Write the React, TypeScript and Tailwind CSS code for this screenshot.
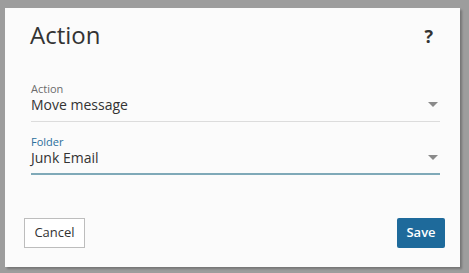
function Caret() {
  return (
    <svg width="10" height="6" viewBox="0 0 10 6" className="shrink-0">
      <path d="M0 0 L10 0 L5 5 Z" fill="#8a8a8a" />
    </svg>
  );
}

function Field({ label, value, active }: { label: string; value: string; active?: boolean }) {
  return (
    <div className={active ? "border-b-2 border-[#7fa9b8]" : "border-b border-[#dcdcdc]"}>
      <div className={`text-[11px] leading-[13px] ${active ? "text-[#2b6f9c]" : "text-[#6b6b6b]"}`}>{label}</div>
      <div className={`flex items-center justify-between ${active ? "pb-[5px]" : "pb-[6px]"}`}>
        <span className="text-[14px] leading-[20px] text-[#333]">{value}</span>
        <span className="pr-[2px]">
          <Caret />
        </span>
      </div>
    </div>
  );
}

export default function App() {
  return (
    <div
      className="h-[273px] w-[469px] bg-[#9d9d9d] pl-[5px] pt-[8px]"
      style={{ fontFamily: '"Open Sans", "Noto Sans", sans-serif' }}
    >
      <div className="flex h-[259px] w-[455px] flex-col bg-[#fbfbfb] shadow-[2px_2px_2px_rgba(0,0,0,0.25)]">
        <div className="flex items-start justify-between pl-[25px] pr-[27px] pt-[11px]">
          <h1 className="text-[24px] leading-[32px] text-[#333]">Action</h1>
          <span className="pt-[5px] text-[18px] font-bold leading-[24px] text-[#333]">?</span>
        </div>
        <div className="mt-[31px] flex flex-col gap-[13px] pl-[26px] pr-[20px]">
          <Field label="Action" value="Move message" />
          <Field label="Folder" value="Junk Email" active />
        </div>
        <div className="mt-auto flex items-center justify-between pb-[19px] pl-[19px] pr-[15px]">
          <button className="h-[30px] w-[61px] border border-[#bdbdbd] bg-white text-[13px] text-[#333]">Cancel</button>
          <button className="h-[30px] w-[48px] rounded-[2px] bg-[#1e6a9b] text-[13px] font-semibold text-white">Save</button>
        </div>
      </div>
    </div>
  );
}
